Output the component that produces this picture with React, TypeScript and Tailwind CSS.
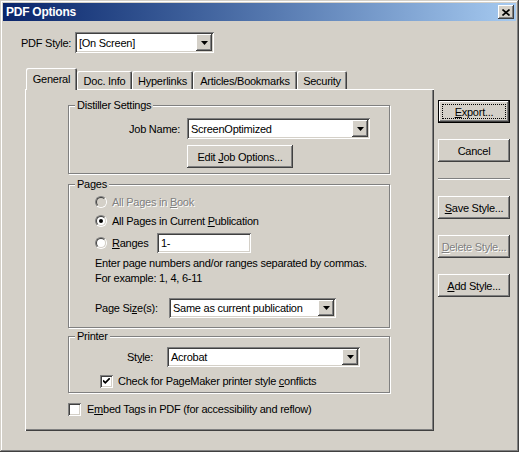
import type { ReactNode } from "react"

const raised =
  "shadow-[inset_-1px_-1px_0_#404040,inset_1px_1px_0_#fff,inset_-2px_-2px_0_#808080,inset_2px_2px_0_#d4d0c8]"
const sunken =
  "shadow-[inset_1px_1px_0_#808080,inset_-1px_-1px_0_#fff,inset_2px_2px_0_#404040,inset_-2px_-2px_0_#d4d0c8]"
const grayText = "text-[#808080] [text-shadow:1px_1px_0_#fff]"

const tabs = [
  { label: "General", width: "w-[51px]", active: true },
  { label: "Doc. Info", width: "w-[55px]", active: false },
  { label: "Hyperlinks", width: "w-[61px]", active: false },
  { label: "Articles/Bookmarks", width: "w-[104px]", active: false },
  { label: "Security", width: "w-[50px]", active: false },
]

const Dropdown = ({ value, className }: { value: string; className: string }) => (
  <div className={`flex bg-white p-[2px] ${sunken} ${className}`}>
    <span className="flex flex-1 items-center overflow-hidden pl-[2px] whitespace-nowrap">{value}</span>
    <span className={`flex w-[16px] items-center justify-center bg-[#d4d0c8] ${raised}`}>
      <svg width="7" height="4" viewBox="0 0 7 4">
        <path d="M0 0h7L3.5 4z" fill="#000" />
      </svg>
    </span>
  </div>
)

interface ButtonProps {
  children: ReactNode
  className?: string
  isDefault?: boolean
  isDisabled?: boolean
}

const Button = ({ children, className = "", isDefault, isDisabled }: ButtonProps) => {
  if (isDefault) {
    return (
      <div className={`relative border border-black ${className}`}>
        <div className={`flex h-full items-center justify-center bg-[#d4d0c8] ${raised}`}>{children}</div>
        <span className="absolute inset-[3px] border border-dotted border-black" />
      </div>
    )
  }
  return (
    <div
      className={`flex items-center justify-center bg-[#d4d0c8] ${raised} ${isDisabled ? grayText : ""} ${className}`}
    >
      {children}
    </div>
  )
}

const Radio = ({ checked, isDisabled }: { checked?: boolean; isDisabled?: boolean }) => (
  <span className="block size-[12px] shrink-0 rounded-full border border-t-[#808080] border-r-white border-b-white border-l-[#808080]">
    <span
      className={`flex size-full items-center justify-center rounded-full border border-t-[#404040] border-r-[#d4d0c8] border-b-[#d4d0c8] border-l-[#404040] ${isDisabled ? "bg-[#d4d0c8]" : "bg-white"}`}
    >
      {checked && <span className="block size-[4px] rounded-full bg-black" />}
    </span>
  </span>
)

const Checkbox = ({ checked }: { checked?: boolean }) => (
  <span className={`flex size-[13px] shrink-0 items-center justify-center bg-white ${sunken}`}>
    {checked && (
      <svg width="7" height="7" viewBox="0 0 7 7">
        <path d="M0 2.5l2.3 2.3L6.8 0.3" stroke="#000" strokeWidth="1.8" fill="none" />
      </svg>
    )}
  </span>
)

const Group = ({ label, className, children }: { label: string; className: string; children: ReactNode }) => (
  <div
    className={`relative w-[322px] border border-[#808080] shadow-[inset_1px_1px_0_#fff,1px_1px_0_#fff] ${className}`}
  >
    <span className="absolute top-[-8px] left-[6px] bg-[#d4d0c8] px-[2px] leading-[14px]">{label}</span>
    {children}
  </div>
)

export default function App() {
  return (
    <div className="font-['Liberation_Sans',Arial,sans-serif] text-[11px] leading-[14px] tracking-[-0.25px] text-black">
      <div
        className={`flex h-[452px] w-[519px] flex-col bg-[#d4d0c8] p-[3px] shadow-[inset_-1px_-1px_0_#404040,inset_1px_1px_0_#d4d0c8,inset_-2px_-2px_0_#808080,inset_2px_2px_0_#fff]`}
      >
        {/* title bar */}
        <div className="flex h-[18px] items-center justify-between bg-linear-to-r from-[#0a246a] to-[#a6caf0] pr-[2px] pl-[3px]">
          <span className="text-[12px] font-bold text-white">PDF Options</span>
          <span className={`flex h-[14px] w-[16px] items-center justify-center bg-[#d4d0c8] ${raised}`}>
            <svg width="8" height="7" viewBox="0 0 8 7">
              <path d="M0.5 0.5l7 6M7.5 0.5l-7 6" stroke="#000" strokeWidth="1.6" />
            </svg>
          </span>
        </div>

        {/* pdf style */}
        <div className="mt-[11px] flex items-center pl-[18px]">
          <span className="w-[54px]">PDF Style:</span>
          <Dropdown value="[On Screen]" className="h-[21px] w-[139px]" />
        </div>

        <div className="mt-[15px] flex pl-[22px]">
          {/* tab control */}
          <div className="w-[409px]">
            <div className="flex h-[21px] items-end pl-[1px]">
              {tabs.map((tab) =>
                tab.active ? (
                  <div
                    key={tab.label}
                    className={`relative z-10 -mb-[1px] flex h-[22px] items-start justify-center rounded-t-[2px] bg-[#d4d0c8] pt-[4px] shadow-[inset_1px_1px_0_#fff,inset_-1px_0_0_#404040,inset_-2px_0_0_#808080] ${tab.width}`}
                  >
                    {tab.label}
                  </div>
                ) : (
                  <div
                    key={tab.label}
                    className={`flex h-[18px] items-start justify-center rounded-t-[2px] pt-[3px] shadow-[inset_1px_1px_0_#fff,inset_-1px_0_0_#404040,inset_-2px_0_0_#808080] ${tab.width}`}
                  >
                    {tab.label}
                  </div>
                ),
              )}
            </div>

            <div className="flex h-[342px] flex-col pt-[16px] pl-[43px] shadow-[inset_1px_1px_0_#fff,inset_-1px_-1px_0_#404040,inset_-2px_-2px_0_#808080]">
              <Group label="Distiller Settings" className="h-[69px] pt-[12px]">
                <div className="flex items-center">
                  <span className="w-[118px] pr-[7px] text-right">Job Name:</span>
                  <Dropdown value="ScreenOptimized" className="h-[21px] w-[183px]" />
                </div>
                <Button className="mt-[6px] ml-[118px] h-[23px] w-[106px]">
                  <span>
                    Edit <u>J</u>ob Options...
                  </span>
                </Button>
              </Group>

              <Group label="Pages" className="mt-[10px] h-[144px] pt-[9px] pl-[26px]">
                <div className={`flex h-[16px] items-center gap-[5px] ${grayText}`}>
                  <Radio isDisabled />
                  <span>
                    All Pages in <u>B</u>ook
                  </span>
                </div>
                <div className="mt-[3px] flex h-[16px] items-center gap-[5px]">
                  <Radio checked />
                  <span>
                    All Pages in Current <u>P</u>ublication
                  </span>
                </div>
                <div className="mt-[4px] flex h-[20px] items-center">
                  <Radio />
                  <span className="ml-[5px] w-[45px]">
                    <u>R</u>anges
                  </span>
                  <span className={`flex h-[20px] w-[94px] items-center bg-white pl-[4px] ${sunken}`}>1-</span>
                </div>
                <div className="mt-[3px] leading-[15px]">
                  <div>Enter page numbers and/or ranges separated by commas.</div>
                  <div>For example: 1, 4, 6-11</div>
                </div>
                <div className="mt-[12px] flex items-center">
                  <span className="w-[74px]">
                    Page Si<u>z</u>e(s):
                  </span>
                  <Dropdown value="Same as current publication" className="h-[20px] w-[167px]" />
                </div>
              </Group>

              <Group label="Printer" className="mt-[8px] h-[57px] pt-[10px]">
                <div className="flex items-center">
                  <span className="w-[98px] pr-[14px] text-right">
                    St<u>y</u>le:
                  </span>
                  <Dropdown value="Acrobat" className="h-[20px] w-[193px]" />
                </div>
                <div className="mt-[7px] flex items-center gap-[5px] pl-[31px]">
                  <Checkbox checked />
                  <span>
                    Check for PageMaker printer style <u>c</u>onflicts
                  </span>
                </div>
              </Group>

              <div className="mt-[9px] flex items-center gap-[6px]">
                <Checkbox />
                <span>
                  E<u>m</u>bed Tags in PDF (for accessibility and reflow)
                </span>
              </div>
            </div>
          </div>

          {/* buttons */}
          <div className="ml-[4px] flex w-[72px] flex-col pt-[32px]">
            <Button isDefault className="h-[23px]">
              <span>
                <u>E</u>xport...
              </span>
            </Button>
            <Button className="mt-[16px] h-[23px]">Cancel</Button>
            <div className="mt-[16px] h-[2px] border-t border-t-[#808080] border-b border-b-white" />
            <Button className="mt-[16px] h-[23px]">
              <span>
                <u>S</u>ave Style...
              </span>
            </Button>
            <Button isDisabled className="mt-[16px] h-[23px]">
              <span>
                <u>D</u>elete Style...
              </span>
            </Button>
            <Button className="mt-[16px] h-[23px]">
              <span>
                <u>A</u>dd Style...
              </span>
            </Button>
          </div>
        </div>
      </div>
    </div>
  )
}
